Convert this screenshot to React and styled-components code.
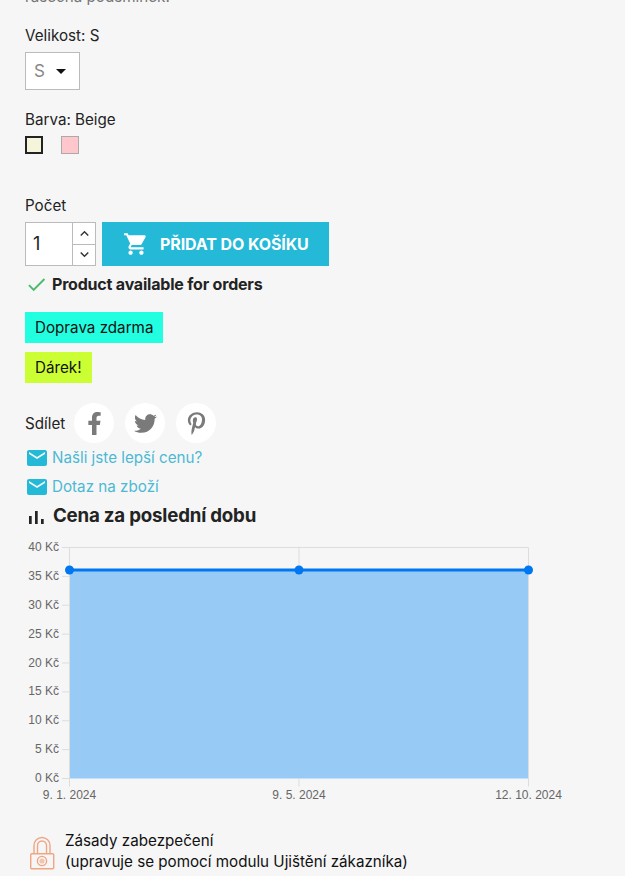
import styled, { createGlobalStyle } from 'styled-components'
import {
  MdArrowDropDown,
  MdCheck,
  MdEmail,
  MdKeyboardArrowDown,
  MdKeyboardArrowUp,
  MdShoppingCart,
} from 'react-icons/md'
import { FaFacebookF, FaPinterestP, FaTwitter } from 'react-icons/fa'

const yLabels = [40, 35, 30, 25, 20, 15, 10, 5, 0]
const xLabels = [
  { x: 69.5, text: '9. 1. 2024' },
  { x: 299, text: '9. 5. 2024' },
  { x: 528.5, text: '12. 10. 2024' },
]
const chartTop = 7.5
const chartBottom = 238.5
const lineY = 30

function PriceChart() {
  const step = (chartBottom - chartTop) / 8
  return (
    <ChartSvg width="625" height="264" viewBox="0 0 625 264">
      <rect x="69.5" y={lineY} width="459" height={chartBottom - lineY} fill="#97caf4" />
      <path
        d={`M69.5 ${chartTop}H528.5V${chartBottom + 8}M299 ${chartTop - 1}V${lineY}M69.5 ${chartTop}V${chartBottom + 8}M299 ${chartBottom}v8`}
        fill="none"
        stroke="#ddd"
      />
      {yLabels.map((value, i) => (
        <g key={value}>
          <path d={`M62 ${chartTop + i * step}h7.5`} stroke="#ddd" />
          <ChartLabel x="59" y={chartTop + i * step + 3.5} textAnchor="end">
            {value} Kč
          </ChartLabel>
        </g>
      ))}
      <path d={`M69.5 ${lineY}H528.5`} stroke="#0077f0" strokeWidth="3" />
      {xLabels.map(label => (
        <g key={label.text}>
          <circle cx={label.x} cy={lineY} r="4.5" fill="#0077f0" />
          <ChartLabel x={label.x} y="259" textAnchor="middle">
            {label.text}
          </ChartLabel>
        </g>
      ))}
    </ChartSvg>
  )
}

function BarsIcon() {
  return (
    <svg width="24" height="24" viewBox="0 0 24 24" fill="#232323">
      <rect x="4" y="12" width="2.7" height="8" />
      <rect x="10" y="7" width="2.7" height="13" />
      <rect x="16" y="15" width="2.7" height="5" />
    </svg>
  )
}

function LockIcon() {
  return (
    <svg width="30" height="36" viewBox="0 0 30 36" fill="none" stroke="#f0a583" strokeWidth="1.4">
      <rect x="5.7" y="17.7" width="23" height="15" rx="1" />
      <path d="M9 17.5V9.5a8 8 0 0 1 16 0v8M12.5 17.5V9.5a4.5 4.5 0 0 1 9 0v8" />
      <circle cx="17" cy="25" r="4.6" />
      <circle cx="17" cy="25" r="2.6" fill="#f6c4ac" stroke="none" />
    </svg>
  )
}

function App() {
  return (
    <>
      <GlobalStyle />
      <Page>
        <ClippedText>rásechá podsmínek.</ClippedText>

        <Label>Velikost: S</Label>
        <SelectBox>
          <span>S</span>
          <MdArrowDropDown size={24} color="#111" />
        </SelectBox>

        <ColorLabel>Barva: Beige</ColorLabel>
        <Swatches>
          <Swatch $color="#f5f5dc" $selected />
          <Swatch $color="#ffc6cc" />
        </Swatches>

        <QtyLabel>Počet</QtyLabel>
        <CartRow>
          <QtyControl>
            <QtyValue>1</QtyValue>
            <QtyArrows>
              <QtyArrow>
                <MdKeyboardArrowUp size={17} />
              </QtyArrow>
              <QtyArrow>
                <MdKeyboardArrowDown size={17} />
              </QtyArrow>
            </QtyArrows>
          </QtyControl>
          <CartButton>
            <MdShoppingCart size={26} />
            Přidat do košíku
          </CartButton>
        </CartRow>

        <Availability>
          <MdCheck size={23} color="#4cbb6c" />
          Product available for orders
        </Availability>

        <Badge $color="#22ffe0">Doprava zdarma</Badge>
        <Badge $color="#ccff33">Dárek!</Badge>

        <ShareRow>
          <ShareLabel>Sdílet</ShareLabel>
          <ShareCircle>
            <FaFacebookF size={23} />
          </ShareCircle>
          <ShareCircle>
            <FaTwitter size={23} />
          </ShareCircle>
          <ShareCircle>
            <FaPinterestP size={23} />
          </ShareCircle>
        </ShareRow>

        <MailLink>
          <MdEmail size={24} color="#24b9d7" />
          Našli jste lepší cenu?
        </MailLink>
        <MailLink>
          <MdEmail size={24} color="#24b9d7" />
          Dotaz na zboží
        </MailLink>

        <ChartHeading>
          <BarsIcon />
          Cena za poslední dobu
        </ChartHeading>
        <PriceChart />

        <Reassurance>
          <LockIcon />
          <p>
            Zásady zabezpečení
            <br />
            (upravuje se pomocí modulu Ujištění zákazníka)
          </p>
        </Reassurance>
      </Page>
    </>
  )
}

const GlobalStyle = createGlobalStyle`
  html, body {
    margin: 0;
    height: 100%;
    overflow: hidden;
    background: #f6f6f6;
  }
  * {
    box-sizing: border-box;
  }
`

const Page = styled.main`
  width: 625px;
  height: 876px;
  overflow: hidden;
  padding: 0 25px;
  font-family: Inter, 'Noto Sans', sans-serif;
  font-size: 15.2px;
  line-height: 22px;
  color: #232323;
`

const ClippedText = styled.p`
  margin: -14px 0 0;
  height: 39px;
  color: #777;
`

const Label = styled.div`
  height: 22px;
  margin-bottom: 5px;
`

const SelectBox = styled.div`
  display: flex;
  align-items: center;
  width: 55px;
  height: 38px;
  padding-left: 8px;
  gap: 4px;
  background: #fff;
  border: 1px solid #bbb;
  color: #888;
  font-size: 17px;
`

const ColorLabel = styled(Label)`
  margin: 19px 0 5px;
`

const Swatches = styled.div`
  display: flex;
  gap: 18px;
`

const Swatch = styled.span`
  width: 18px;
  height: 18px;
  background: ${props => props.$color};
  border: ${props => (props.$selected ? '2px solid #232323' : '1px solid #aaa')};
`

const QtyLabel = styled(Label)`
  margin: 41px 0 5px;
`

const CartRow = styled.div`
  display: flex;
  gap: 6px;
  height: 44px;
`

const QtyControl = styled.div`
  display: flex;
  width: 71px;
  background: #fff;
  border: 1px solid #bbb;
`

const QtyValue = styled.div`
  flex: 1;
  display: flex;
  align-items: center;
  padding-left: 7px;
  font-size: 18px;
`

const QtyArrows = styled.div`
  display: flex;
  flex-direction: column;
  width: 23px;
  border-left: 1px solid #bbb;
`

const QtyArrow = styled.div`
  flex: 1;
  display: flex;
  align-items: center;
  justify-content: center;
  color: #333;

  & + & {
    border-top: 1px solid #bbb;
  }
`

const CartButton = styled.button`
  display: flex;
  align-items: center;
  gap: 11px;
  width: 227px;
  padding: 0 0 0 21px;
  border: 0;
  background: #24b9d7;
  color: #fff;
  font-family: inherit;
  font-size: 16px;
  font-weight: 700;
  letter-spacing: -0.1px;
  text-transform: uppercase;
`

const Availability = styled.div`
  display: flex;
  align-items: center;
  gap: 4px;
  height: 24px;
  margin: 6px 0 16px;
  font-weight: 700;
  font-size: 16px;
  letter-spacing: -0.2px;
`

const Badge = styled.div`
  width: fit-content;
  height: 31px;
  margin-bottom: 9px;
  padding: 0 10px;
  background: ${props => props.$color};
  color: #111;
  line-height: 31px;
`

const ShareRow = styled.div`
  display: flex;
  align-items: center;
  gap: 11px;
  height: 40px;
  margin-top: 20px;
`

const ShareLabel = styled.span`
  width: 38px;
  margin-top: 2px;
  white-space: nowrap;
`

const ShareCircle = styled.span`
  display: flex;
  align-items: center;
  justify-content: center;
  width: 40px;
  height: 40px;
  border-radius: 50%;
  background: #fff;
  color: #7a7a7a;
`

const MailLink = styled.a`
  display: flex;
  align-items: center;
  gap: 3px;
  height: 29px;
  color: #4cb9d4;
`

const ChartHeading = styled.h2`
  display: flex;
  align-items: center;
  gap: 4px;
  height: 28px;
  margin: 1px 0 10px;
  font-size: 18.7px;
  font-weight: 700;
  letter-spacing: -0.2px;
  color: #232323;
`

const ChartSvg = styled.svg`
  display: block;
  margin: 0 0 0 -25px;
`

const ChartLabel = styled.text`
  font-family: 'Liberation Sans', Arial, sans-serif;
  font-size: 12px;
  fill: #666;
`

const Reassurance = styled.div`
  display: flex;
  align-items: flex-end;
  gap: 10px;
  margin-top: 26px;

  p {
    margin: 0;
    line-height: 21px;
    color: #111;
  }
`

export default App
